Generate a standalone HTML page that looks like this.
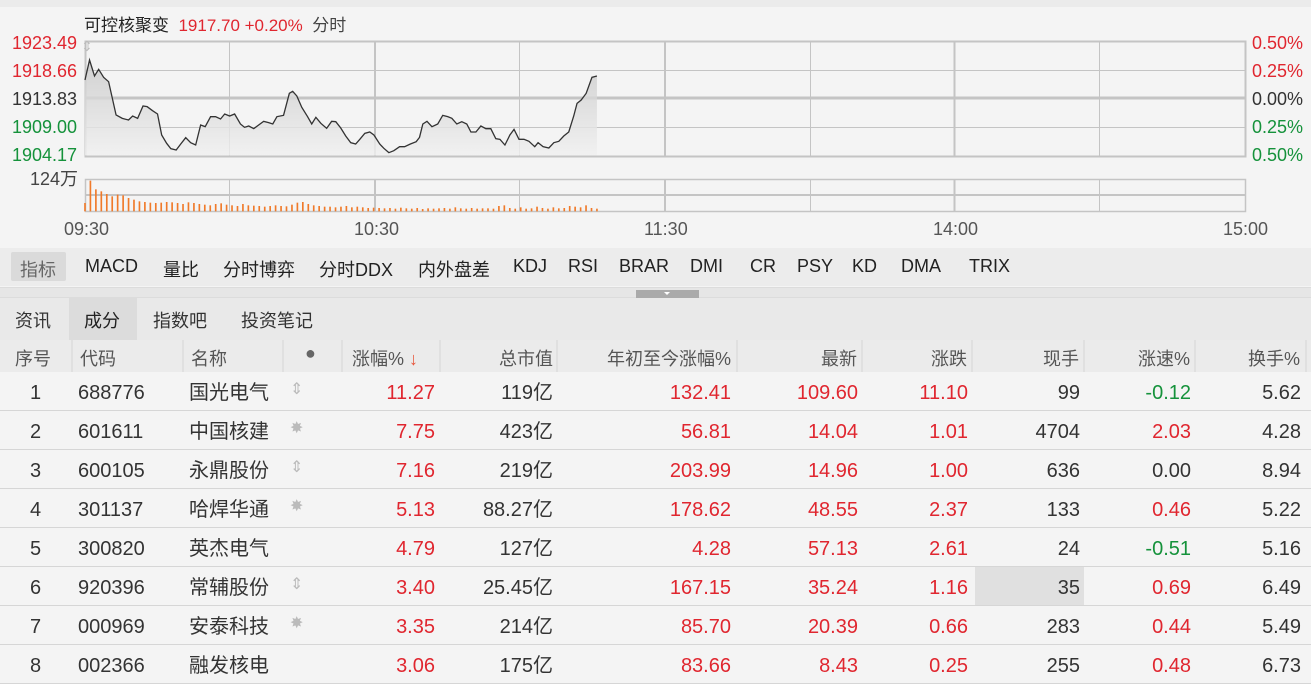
<!DOCTYPE html>
<html><head><meta charset="utf-8">
<style>
*{margin:0;padding:0;box-sizing:border-box}
body{width:1311px;height:678px;overflow:hidden;background:#f4f4f4;font-family:"Liberation Sans","Noto Sans CJK SC",sans-serif;color:#333;position:relative}
.a{position:absolute;white-space:nowrap}
.r{color:#e0262f}.g{color:#15923b}
.lbl{font-size:18px;line-height:20px}
.ind{position:absolute;top:248px;left:0;width:1311px;height:38px;background:#ececec}
.ind span{position:absolute;top:8px;font-size:18px;color:#222}
.tabs{position:absolute;top:298px;left:0;width:1311px;height:42px;background:#e9e9e9}
.tabs span{position:absolute;top:9px;font-size:18px;color:#333}
.hdr{position:absolute;top:340px;left:0;width:1311px;height:32px;background:#ebebeb}
.hdr span{position:absolute;top:5px;font-size:18px;color:#555}
.sep{position:absolute;top:0;width:2px;height:32px;background:#e0e0e0}
.row{position:absolute;left:0;width:1311px;height:39px;border-bottom:1px solid #d6d6d6}
.row span{position:absolute;top:10px;font-size:20px;line-height:22px}
</style></head><body>
<div class="a" style="left:0;top:0;width:1311px;height:7px;background:#ebebeb"></div>
<div class="a" style="left:84px;top:11px;font-size:17px"><span style="color:#222">可控核聚变</span>&nbsp; <span class="r">1917.70 +0.20%</span>&nbsp; <span style="color:#444">分时</span></div>
<div class="a lbl r" style="left:12px;top:33px">1923.49</div>
<div class="a lbl r" style="left:12px;top:61px">1918.66</div>
<div class="a lbl" style="left:12px;top:89px;color:#333">1913.83</div>
<div class="a lbl g" style="left:12px;top:117px">1909.00</div>
<div class="a lbl g" style="left:12px;top:145px">1904.17</div>
<div class="a lbl" style="left:30px;top:169px;color:#444">124万</div>
<div class="a lbl r" style="left:1252px;top:33px">0.50%</div>
<div class="a lbl r" style="left:1252px;top:61px">0.25%</div>
<div class="a lbl" style="left:1252px;top:89px">0.00%</div>
<div class="a lbl g" style="left:1252px;top:117px">0.25%</div>
<div class="a lbl g" style="left:1252px;top:145px">0.50%</div>
<div class="a lbl" style="left:64px;top:219px;color:#555">09:30</div>
<div class="a lbl" style="left:354px;top:219px;color:#555">10:30</div>
<div class="a lbl" style="left:644px;top:219px;color:#555">11:30</div>
<div class="a lbl" style="left:933px;top:219px;color:#555">14:00</div>
<div class="a lbl" style="left:1223px;top:219px;color:#555">15:00</div>
<svg class="a" style="left:0;top:0" width="1311" height="240">
<g stroke="#c4c4c4" fill="none">
<rect x="85.5" y="41.5" width="1160" height="115" stroke-width="2"/>
<line x1="85" y1="70.5" x2="1245" y2="70.5"/>
<line x1="85" y1="98" x2="1245" y2="98" stroke-width="3"/>
<line x1="85" y1="127.5" x2="1245" y2="127.5"/>
<line x1="229.5" y1="41" x2="229.5" y2="156"/><line x1="519.5" y1="41" x2="519.5" y2="156"/><line x1="810.5" y1="41" x2="810.5" y2="156"/><line x1="1099.5" y1="41" x2="1099.5" y2="156"/>
<line x1="375" y1="41" x2="375" y2="156" stroke-width="2"/><line x1="665" y1="41" x2="665" y2="156" stroke-width="2"/><line x1="954.5" y1="41" x2="954.5" y2="156" stroke-width="2"/>
<rect x="85.5" y="179.5" width="1160" height="32" stroke-width="1.5"/>
<line x1="85" y1="195" x2="1245" y2="195" stroke-width="2"/>
<line x1="229.5" y1="179" x2="229.5" y2="211"/><line x1="519.5" y1="179" x2="519.5" y2="211"/><line x1="810.5" y1="179" x2="810.5" y2="211"/><line x1="1099.5" y1="179" x2="1099.5" y2="211"/>
<line x1="375" y1="179" x2="375" y2="211" stroke-width="2"/><line x1="665" y1="179" x2="665" y2="211" stroke-width="2"/><line x1="954.5" y1="179" x2="954.5" y2="211" stroke-width="2"/>
</g>
<text x="81" y="51" font-size="14" fill="#bbb">⇕</text>
</svg>
<svg class="a" style="left:0;top:0" width="650" height="240" viewBox="0 0 1568 720" preserveAspectRatio="none">
<defs><linearGradient id="gr" x1="0" y1="0" x2="0" y2="1"><stop offset="0" stop-color="#c8c8c8"/><stop offset="1" stop-color="#f0f0f0"/></linearGradient></defs>
<g id="vol" fill="#f07a2a"></g>
<path id="ar" fill="url(#gr)" opacity="0.8"/>
<polyline id="pl" fill="none" stroke="#333" stroke-width="1.3" vector-effect="non-scaling-stroke"/>
</svg>
<script>
var p=[205,240,216,180,228,228,238,208,250,232,262,245,280,345,295,355,310,360,320,348,332,355,345,318,355,320,368,332,380,342,390,405,402,430,412,446,425,450,436,432,448,413,460,428,472,435,484,375,495,380,508,350,520,350,532,357,542,342,554,348,566,342,580,372,590,382,600,378,612,386,624,375,636,364,648,368,658,372,668,350,684,346,698,280,706,274,716,288,728,322,742,350,752,372,762,352,774,370,788,385,800,364,810,365,822,384,834,408,846,428,858,432,868,418,880,400,892,396,902,405,916,432,926,445,938,458,950,452,964,440,976,440,990,432,1004,425,1012,412,1020,372,1030,364,1042,380,1056,372,1068,346,1080,350,1090,355,1102,372,1114,365,1126,372,1136,396,1148,396,1160,378,1172,386,1184,386,1196,416,1206,418,1218,435,1230,405,1240,388,1252,418,1264,418,1276,424,1290,440,1298,428,1310,440,1324,444,1336,428,1348,424,1360,408,1372,396,1384,348,1392,310,1402,300,1414,280,1428,232,1440,228];
var s='';for(var i=0;i<p.length;i+=2)s+=p[i]+','+p[i+1]+' ';
document.getElementById('pl').setAttribute('points',s);
document.getElementById('ar').setAttribute('d','M205,466 L'+s+' L1440,466 Z');
var h=[25,92,66,60,52,45,50,48,40,35,30,28,26,25,26,28,27,25,22,27,25,22,20,18,22,24,20,18,16,22,18,17,16,14,16,18,16,15,20,26,28,22,18,16,14,14,12,14,16,12,14,12,10,11,10,9,10,8,11,9,8,10,7,9,8,9,10,8,12,9,8,10,8,9,9,8,16,18,10,8,12,8,9,14,10,8,12,9,10,16,14,12,18,10,8];
var g='',st=(1440-205)/(h.length-1);
for(var j=0;j<h.length;j++){var x=205+j*st;g+='<rect x="'+(x-2).toFixed(1)+'" y="'+(634-h[j])+'" width="4" height="'+h[j]+'"/>';}
document.getElementById('vol').innerHTML=g;
</script>
<div class="ind">
<div class="a" style="left:11px;top:4px;width:55px;height:29px;background:#dadada;border-radius:2px"></div>
<span style="left:20px;color:#666">指标</span><span style="left:85px">MACD</span><span style="left:163px">量比</span><span style="left:223px">分时博弈</span><span style="left:319px">分时DDX</span><span style="left:418px">内外盘差</span><span style="left:513px">KDJ</span><span style="left:568px">RSI</span><span style="left:619px">BRAR</span><span style="left:690px">DMI</span><span style="left:750px">CR</span><span style="left:797px">PSY</span><span style="left:852px">KD</span><span style="left:901px">DMA</span><span style="left:969px">TRIX</span>
</div>
<div class="a" style="left:0;top:287px;width:1311px;height:11px;background:#e6e6e6;border-top:1px solid #dcdcdc;border-bottom:1px solid #dcdcdc"></div>
<div class="a" style="left:636px;top:290px;width:63px;height:9px;background:#aaa"></div>
<div class="a" style="left:664px;top:292px;width:0;height:0;border-left:3px solid transparent;border-right:3px solid transparent;border-top:3px solid #fff"></div>
<div class="tabs">
<div class="a" style="left:69px;top:0;width:68px;height:42px;background:#dcdcdc"></div>
<span style="left:15px">资讯</span><span style="left:84px;color:#222">成分</span><span style="left:153px">指数吧</span><span style="left:241px">投资笔记</span>
</div>
<div class="hdr">
<span style="left:15px">序号</span><span style="left:80px">代码</span><span style="left:191px">名称</span>
<span style="left:305px;top:3px;color:#666;font-size:18px">●</span>
<span style="left:352px">涨幅%<b style="font-weight:normal;color:#e8553a"> ↓</b></span>
<span style="right:758px">总市值</span><span style="right:580px">年初至今涨幅%</span><span style="right:454px">最新</span><span style="right:344px">涨跌</span><span style="right:232px">现手</span><span style="right:121px">涨速%</span><span style="right:11px">换手%</span>
<i class="sep" style="left:71px"></i><i class="sep" style="left:182px"></i><i class="sep" style="left:282px"></i><i class="sep" style="left:341px"></i><i class="sep" style="left:439px"></i><i class="sep" style="left:556px"></i><i class="sep" style="left:736px"></i><i class="sep" style="left:861px"></i><i class="sep" style="left:971px"></i><i class="sep" style="left:1083px"></i><i class="sep" style="left:1194px"></i><i class="sep" style="left:1305px"></i>
</div>
<div id="rows"></div>
<script>
var d=[["1","688776","国光电气","⇕","11.27","119亿","132.41","109.60","11.10","99","-0.12","5.62"],
["2","601611","中国核建","✸","7.75","423亿","56.81","14.04","1.01","4704","2.03","4.28"],
["3","600105","永鼎股份","⇕","7.16","219亿","203.99","14.96","1.00","636","0.00","8.94"],
["4","301137","哈焊华通","✸","5.13","88.27亿","178.62","48.55","2.37","133","0.46","5.22"],
["5","300820","英杰电气","","4.79","127亿","4.28","57.13","2.61","24","-0.51","5.16"],
["6","920396","常辅股份","⇕","3.40","25.45亿","167.15","35.24","1.16","35","0.69","6.49"],
["7","000969","安泰科技","✸","3.35","214亿","85.70","20.39","0.66","283","0.44","5.49"],
["8","002366","融发核电","","3.06","175亿","83.66","8.43","0.25","255","0.48","6.73"]];
var H='';
for(var i=0;i<d.length;i++){var r=d[i],t=372+i*39;
var sp=r[10].charAt(0)=='-'?'g':(r[10]=='0.00'?'':'r');
H+='<div class="row" style="top:'+t+'px">'+(i==5?'<div class="a" style="left:975px;top:0;width:109px;height:38px;background:#e0e0e0"></div>':'')+
'<span style="left:30px">'+r[0]+'</span><span style="left:78px">'+r[1]+'</span><span style="left:189px">'+r[2]+'</span>'+
'<span style="left:290px;font-size:16px;color:#bbb;top:7px">'+r[3]+'</span>'+
'<span class="r" style="right:876px">'+r[4]+'</span><span style="right:758px">'+r[5]+'</span><span class="r" style="right:580px">'+r[6]+'</span><span class="r" style="right:453px">'+r[7]+'</span><span class="r" style="right:343px">'+r[8]+'</span><span style="right:231px">'+r[9]+'</span><span class="'+sp+'" style="right:120px">'+r[10]+'</span><span style="right:10px">'+r[11]+'</span></div>';}
document.getElementById('rows').innerHTML=H;
</script>
</body></html>
